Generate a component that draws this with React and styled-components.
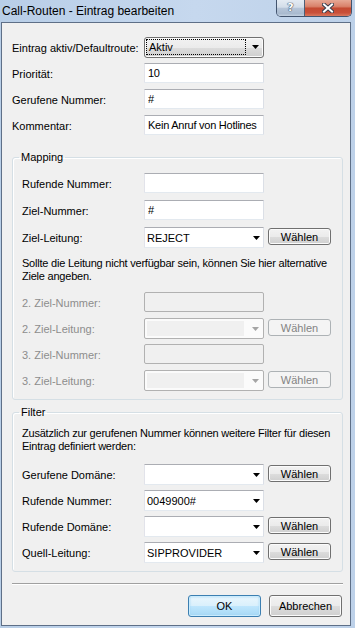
import React from 'react'
import styled, { createGlobalStyle } from 'styled-components'

const GlobalStyle = createGlobalStyle`
  html, body {
    margin: 0;
    padding: 0;
  }
  body {
    width: 355px;
    height: 628px;
    overflow: hidden;
    font-family: "Liberation Sans", Arial, sans-serif;
    font-size: 11px;
    color: #000;
  }
`

const Window = styled.div`
  width: 355px;
  height: 628px;
  box-sizing: border-box;
  padding: 0 4px 2px 1px;
  display: flex;
  flex-direction: column;
  background: linear-gradient(to right, #b8cee7 0%, #c6d8ee 55%, #bdd1e9 100%);
`

// Title bar

const TitleBar = styled.div`
  height: 22px;
  flex: none;
  display: flex;
  align-items: flex-start;
  justify-content: space-between;
`

const Title = styled.div`
  padding-left: 1px;
  line-height: 22px;
  font-size: 12px;
  color: #000;
  white-space: nowrap;
`

const Captions = styled.div`
  display: flex;
  margin-right: -1px;
  border: 1px solid #42546e;
  border-top: none;
  border-radius: 0 0 5px 5px;
  overflow: hidden;
  height: 16px;
`

const CaptionButton = styled.div`
  width: ${p => p.$w}px;
  height: 16px;
  display: flex;
  align-items: center;
  justify-content: center;
  background: ${p => p.$close
    ? 'linear-gradient(#e6a895 0%, #d9826b 40%, #c44a32 52%, #c9503a 80%, #d9785f 100%)'
    : 'linear-gradient(#e4ebf3 0%, #d3dde9 45%, #b6c5d8 52%, #a9bacf 85%, #c3d1e1 100%)'};
  & + & {
    border-left: 1px solid #4d5e76;
  }
`

const HelpGlyph = styled.span`
  font-family: "DejaVu Sans", sans-serif;
  font-weight: bold;
  font-size: 11px;
  line-height: 16px;
  color: #fff;
  text-shadow: 0 0 1px #3a4a60, 0 0 1px #3a4a60, 0 0 1px #3a4a60;
`

// Client area

const Client = styled.div`
  flex: 1;
  box-sizing: border-box;
  display: flex;
  flex-direction: column;
  padding: 14px 7px 0 10px;
  background: #f0f0f0;
  border: 1px solid #5e6f87;
`

const FieldGrid = styled.div`
  display: grid;
  grid-template-columns: 1fr 120px 63px;
  grid-auto-rows: 21px;
  column-gap: 4px;
  row-gap: ${p => p.$gap}px;
  margin-top: ${p => p.$mt || 0}px;
  padding-right: ${p => p.$pr || 0}px;
`

const Label = styled.label`
  grid-column: 1;
  align-self: center;
  white-space: nowrap;
  color: ${p => (p.$disabled ? '#8d8d8d' : '#000')};
`

const TextBox = styled.input`
  grid-column: 2;
  box-sizing: border-box;
  width: 120px;
  height: 20px;
  margin: 0;
  padding: 0 3px;
  font: inherit;
  letter-spacing: -0.25px;
  color: #000;
  background: #fff;
  border: 1px solid;
  border-color: #abadb3 #dbdfe6 #e3e9ef #e2e3ea;
  border-radius: 1px;
  outline: none;

  &:disabled {
    background: #f0f0f0;
    border-color: #b1b1b1;
    border-radius: 2px;
  }
`

const Combo = styled.div`
  grid-column: 2;
  box-sizing: border-box;
  width: 120px;
  height: 21px;
  display: flex;
  align-items: center;
  padding: ${p => (p.$disabled ? '2px' : '0 0 0 2px')};
  background: ${p => (p.$disabled ? '#fbfbfb' : '#fff')};
  border: 1px solid;
  border-color: ${p => (p.$disabled ? '#b1b1b1' : '#abadb3 #dbdfe6 #e3e9ef #e2e3ea')};
  border-radius: ${p => (p.$disabled ? '2px' : '1px')};
`

const ComboValue = styled.span`
  flex: 1;
  white-space: nowrap;
`

const DisabledEdit = styled.span`
  width: 97px;
  height: 15px;
  background: #f0f0f0;
`

const DropList = styled.div`
  grid-column: 2;
  box-sizing: border-box;
  width: 120px;
  height: 21px;
  display: flex;
  align-items: center;
  padding: 1px 0 2px 1px;
  border: 1px solid #707070;
  border-radius: 3px;
  background: linear-gradient(#f2f2f2 0%, #ebebeb 50%, #dddddd 51%, #cfcfcf 100%);
  box-shadow: inset 0 0 0 1px #fbfbfb;
`

const FocusRect = styled.span`
  box-sizing: border-box;
  width: 100px;
  height: 100%;
  display: flex;
  align-items: center;
  padding-left: 2px;
  border: 1px dotted #000;
`

const Arrow = styled.svg`
  flex: none;
  margin-left: auto;
  margin-right: ${p => p.$mr ?? 3}px;
`

const Button = styled.button`
  box-sizing: border-box;
  width: ${p => p.$w || 63}px;
  height: ${p => p.$h || 17}px;
  margin: ${p => p.$mt ?? 1}px 0 0;
  padding: 0;
  align-self: start;
  font: inherit;
  color: #000;
  border: 1px solid #707070;
  border-radius: 3px;
  background: linear-gradient(#f2f2f2 0%, #ebebeb 50%, #dddddd 51%, #cfcfcf 100%);
  box-shadow: inset 0 0 0 1px #fbfbfb;

  &:disabled {
    color: #838383;
    border-color: #adb2b5;
    background: #f4f4f4;
    box-shadow: none;
  }
`

const DefaultButton = styled(Button)`
  border-color: #3c7fb1;
  background: linear-gradient(#eaf6fd 0%, #d9f0fc 50%, #bee6fd 51%, #a7d9f5 100%);
  box-shadow: inset 0 0 0 1px #c9ebfd, inset 0 0 2px 1px #9fd6f2;
`

const Group = styled.fieldset`
  min-width: 0;
  margin: ${p => p.$mt}px 0 0;
  padding: ${p => p.$pt}px 11px ${p => p.$pb}px 9px;
  border: 1px solid #d5dfe5;
  border-radius: 3px;
  box-shadow: inset 1px 1px 0 #fff;
`

const Legend = styled.legend`
  margin-left: -3px;
  padding: 0 2px;
  line-height: 13px;
`

const Note = styled.p`
  margin: ${p => p.$mt}px 0 0;
  line-height: 13px;
  letter-spacing: -0.22px;
  white-space: nowrap;
  color: #000;
`

const Separator = styled.div`
  margin-top: 11px;
  border-top: 1px solid #a0a0a0;
  border-bottom: 1px solid #fff;
`

const Footer = styled.div`
  display: flex;
  justify-content: flex-end;
  gap: 8px;
  margin-top: 10px;
  padding-right: 1px;
`

const DownArrow = ({ color = '#000', mr }) => (
  <Arrow width="7" height="4" viewBox="0 0 7 4" $mr={mr}>
    <polygon points="0,0 7,0 3.5,4" fill={color} />
  </Arrow>
)

const CloseGlyph = () => (
  <svg width="12" height="10" viewBox="0 0 12 10">
    <path d="M2 1.5 L10 8.5 M10 1.5 L2 8.5" stroke="#3a3f4e" strokeWidth="4" strokeLinecap="square" />
    <path d="M2 1.5 L10 8.5 M10 1.5 L2 8.5" stroke="#fff" strokeWidth="2" strokeLinecap="square" />
  </svg>
)

const EditCombo = ({ value }) => (
  <Combo>
    <ComboValue>{value}</ComboValue>
    <DownArrow />
  </Combo>
)

const DisabledCombo = () => (
  <Combo $disabled>
    <DisabledEdit />
    <DownArrow color="#a5a5a5" mr={2} />
  </Combo>
)

export default function App() {
  return (
    <>
      <GlobalStyle />
      <Window>
        <TitleBar>
          <Title>Call-Routen - Eintrag bearbeiten</Title>
          <Captions>
            <CaptionButton $w={27}>
              <HelpGlyph>?</HelpGlyph>
            </CaptionButton>
            <CaptionButton $w={46} $close>
              <CloseGlyph />
            </CaptionButton>
          </Captions>
        </TitleBar>

        <Client>
          <FieldGrid $gap={5} $pr={12}>
            <Label>Eintrag aktiv/Defaultroute:</Label>
            <DropList>
              <FocusRect>Aktiv</FocusRect>
              <DownArrow mr={4} />
            </DropList>
            <span />

            <Label>Priorität:</Label>
            <TextBox defaultValue="10" />
            <span />

            <Label>Gerufene Nummer:</Label>
            <TextBox defaultValue="#" />
            <span />

            <Label>Kommentar:</Label>
            <TextBox defaultValue="Kein Anruf von Hotlines" />
          </FieldGrid>

          <Group $mt={15} $pt={9} $pb={8}>
            <Legend>Mapping</Legend>
            <FieldGrid $gap={6}>
              <Label>Rufende Nummer:</Label>
              <TextBox defaultValue="" />
              <span />

              <Label>Ziel-Nummer:</Label>
              <TextBox defaultValue="#" />
              <span />

              <Label>Ziel-Leitung:</Label>
              <EditCombo value="REJECT" />
              <Button>Wählen</Button>
            </FieldGrid>

            <Note $mt={9}>
              Sollte die Leitung nicht verfügbar sein, können Sie hier alternative
              <br />
              Ziele angeben.
            </Note>

            <FieldGrid $gap={5} $mt={9}>
              <Label $disabled>2. Ziel-Nummer:</Label>
              <TextBox disabled />
              <span />

              <Label $disabled>2. Ziel-Leitung:</Label>
              <DisabledCombo />
              <Button disabled>Wählen</Button>

              <Label $disabled>3. Ziel-Nummer:</Label>
              <TextBox disabled />
              <span />

              <Label $disabled>3. Ziel-Leitung:</Label>
              <DisabledCombo />
              <Button disabled>Wählen</Button>
            </FieldGrid>
          </Group>

          <Group $mt={6} $pt={8} $pb={8}>
            <Legend>Filter</Legend>
            <Note $mt={0}>
              Zusätzlich zur gerufenen Nummer können weitere Filter für diesen
              <br />
              Eintrag definiert werden:
            </Note>

            <FieldGrid $gap={5} $mt={11}>
              <Label>Gerufene Domäne:</Label>
              <EditCombo value="" />
              <Button>Wählen</Button>

              <Label>Rufende Nummer:</Label>
              <EditCombo value="0049900#" />
              <span />

              <Label>Rufende Domäne:</Label>
              <EditCombo value="" />
              <Button>Wählen</Button>

              <Label>Quell-Leitung:</Label>
              <EditCombo value="SIPPROVIDER" />
              <Button>Wählen</Button>
            </FieldGrid>
          </Group>

          <Separator />

          <Footer>
            <DefaultButton $w={73} $h={22} $mt={0}>OK</DefaultButton>
            <Button $w={73} $h={22} $mt={0}>Abbrechen</Button>
          </Footer>
        </Client>
      </Window>
    </>
  )
}
